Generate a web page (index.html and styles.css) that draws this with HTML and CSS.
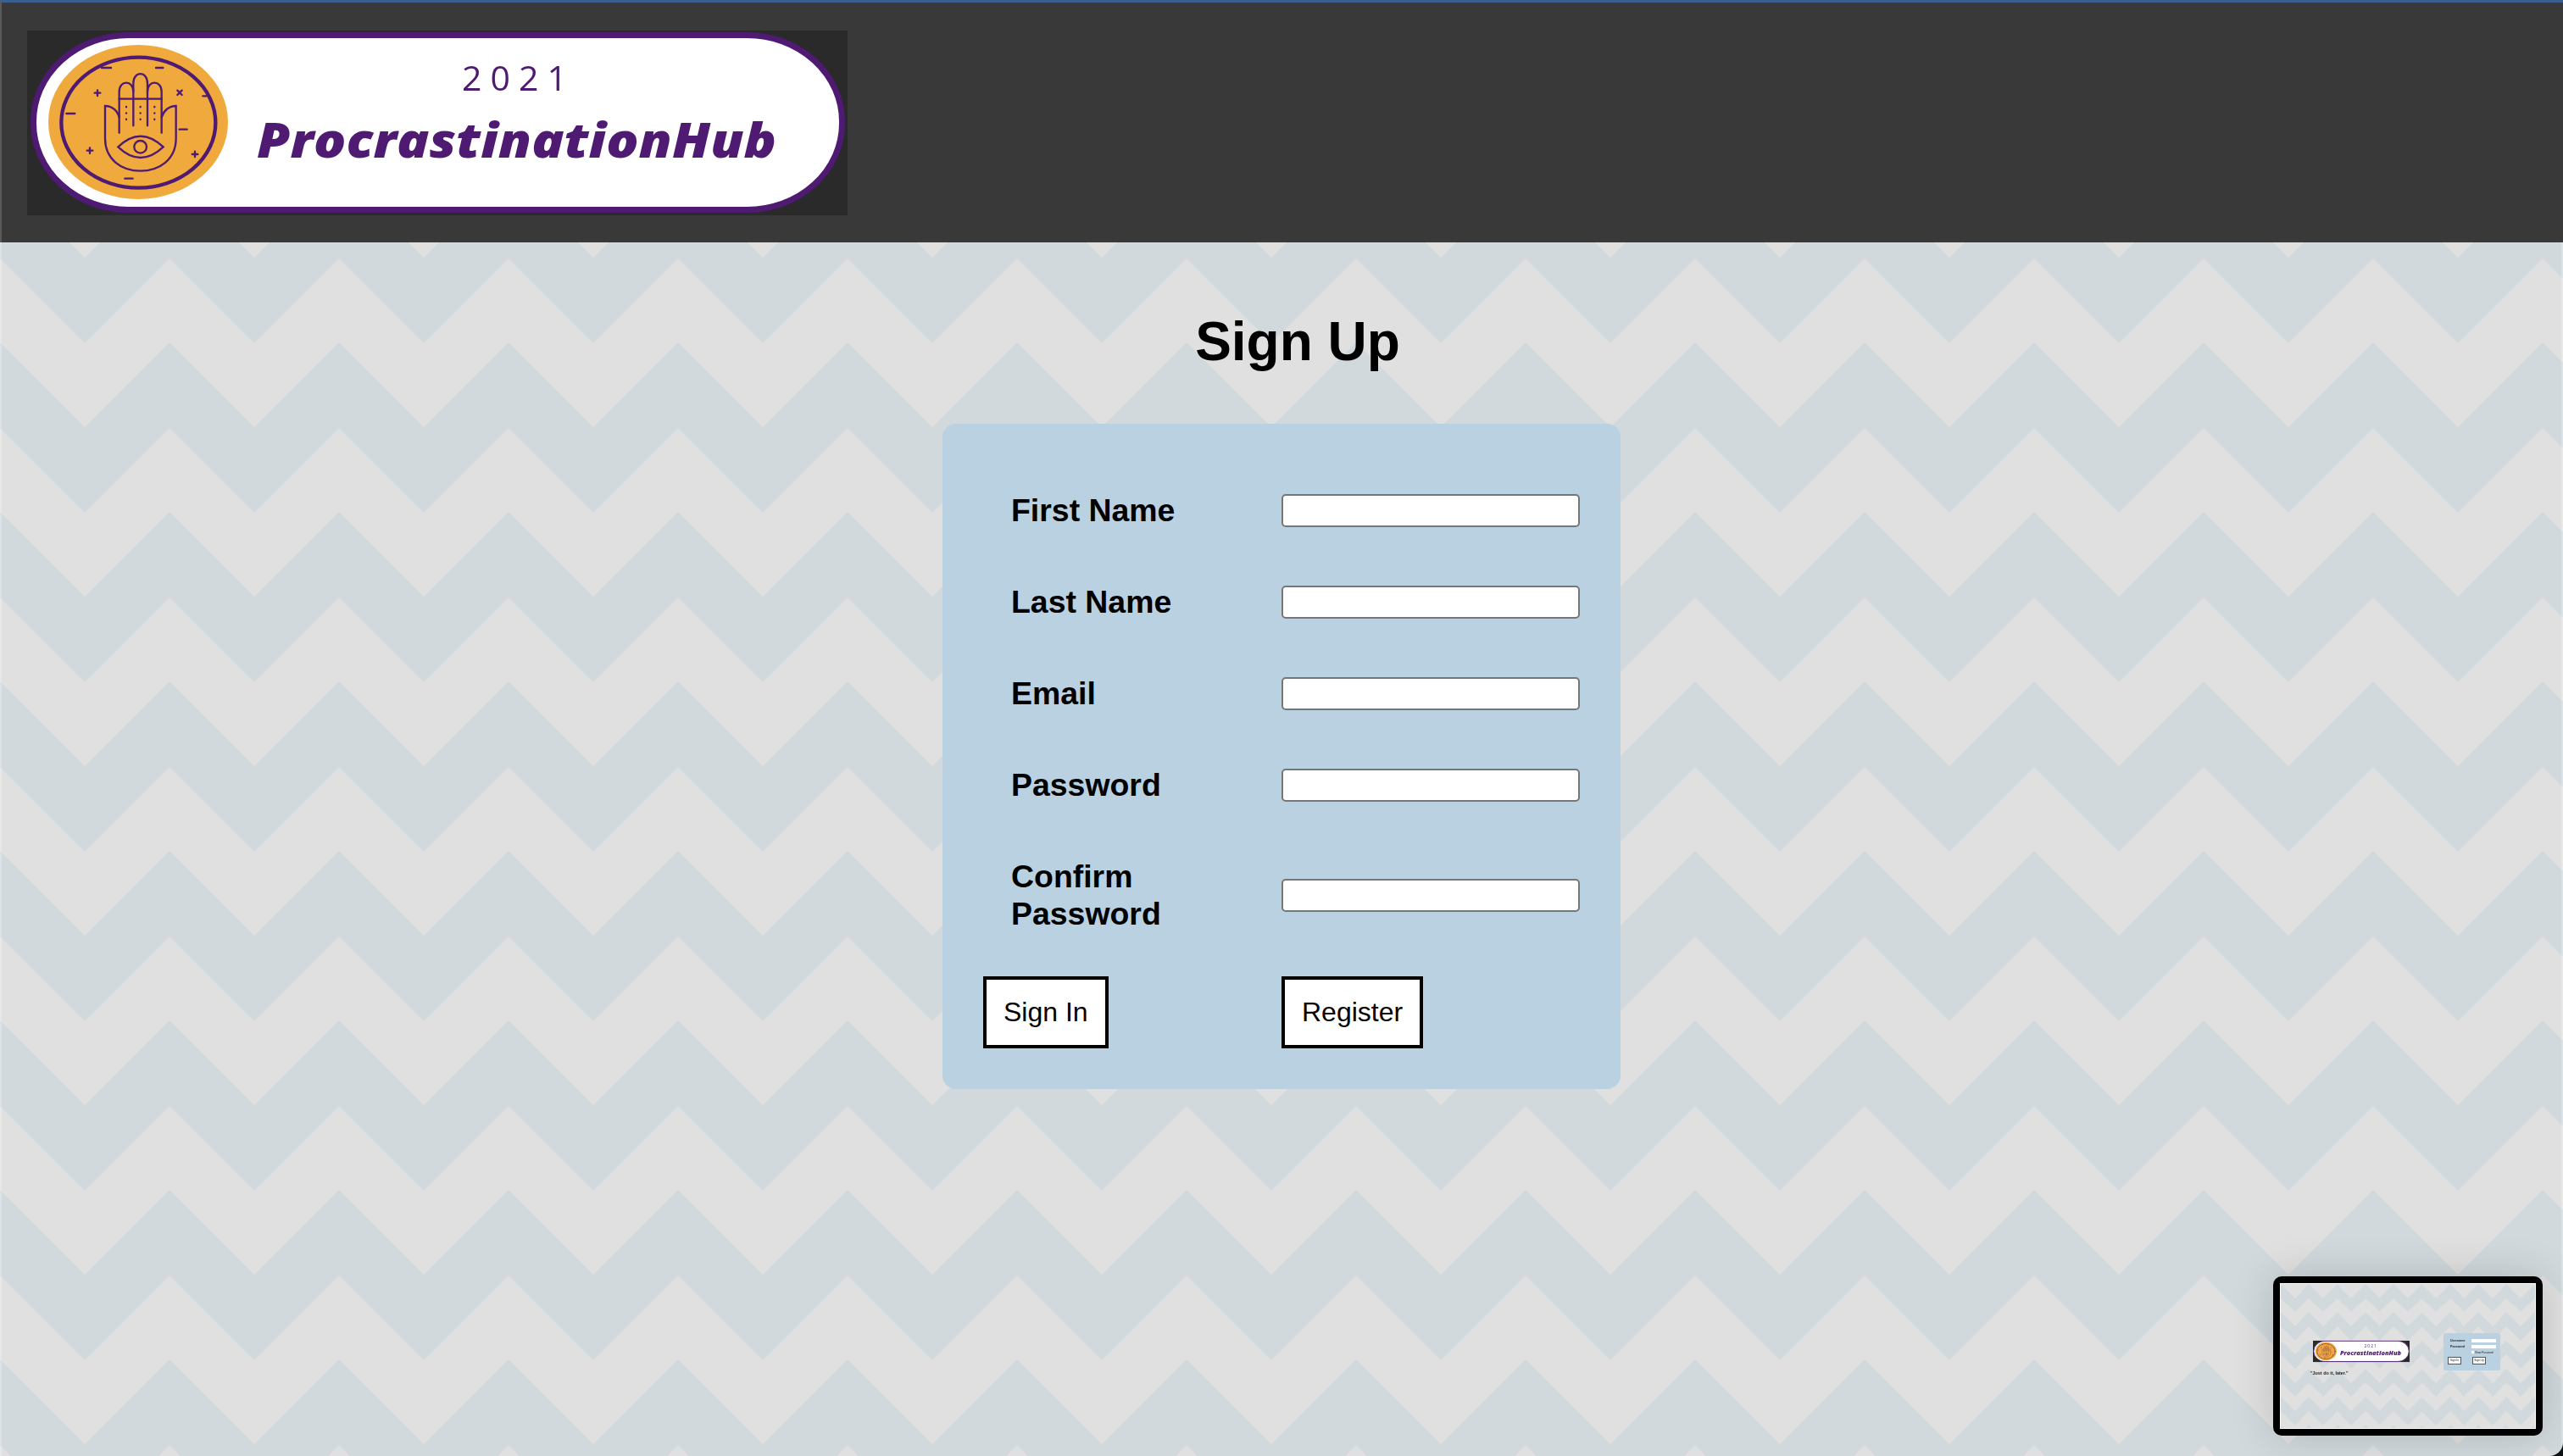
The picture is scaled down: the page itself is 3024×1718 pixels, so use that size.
FILE: index.html
```html
<!DOCTYPE html>
<html lang="en">
<head>
	<meta charset="UTF-8">
	<title>Sign Up</title>
	<link rel="stylesheet" href="styles.css">
</head>
<body>
	<svg class="defs" width="0" height="0">
		<symbol id="logo-art" viewBox="0 0 968 218">
			<rect width="968" height="218" fill="#2a2a2a"/>
			<rect x="7.5" y="5.5" width="954" height="206" rx="112" ry="102" fill="#fff" stroke="#4f1a72" stroke-width="7"/>
			<ellipse cx="131" cy="108" rx="106" ry="91" fill="#f0a93c"/>
			<!-- hand, coords traced from a 3x crop -->
			<g transform="translate(-2 -6) scale(.3333)" fill="none" stroke="#4f1a72" stroke-width="7" stroke-linecap="round">
				<ellipse cx="400" cy="344" rx="273" ry="231" stroke-width="13"/>
				<path d="M382 355V205C382 160 432 160 432 205V355"/>
				<path d="M332 380V235C332 192 382 192 382 235"/>
				<path d="M432 235C432 192 482 192 482 235V380"/>
				<path d="M332 260H482"/>
				<path d="M332 325C325 300 305 285 282 285V400C282 475 340 515 407 515C474 515 533 475 533 400V285C510 285 490 300 482 325"/>
				<path d="M328 430Q407 354 488 430Q407 506 328 430Z"/>
				<circle cx="407" cy="430" r="22"/>
				<path d="M270 150H303M462 150H487M145 312H175M545 368H572M352 542H380M628 250H640"/>
				<path d="M245 239H265M255 229V249M218 443H238M228 433V453M590 456H610M600 446V466M538 230L554 246M554 230L538 246"/>
				<path stroke-dasharray="1 21" d="M357 288V354M407 288V354M457 288V354"/>
			</g>
		</symbol>
	</svg>

	<header class="topbar">
		<svg class="logo" viewBox="0 0 968 218">
			<use href="#logo-art" width="968" height="218"/>
			<text class="logo-year" x="575" y="71" text-anchor="middle" textLength="124">2021</text>
			<text class="logo-name" x="271" y="150" textLength="613" lengthAdjust="spacingAndGlyphs">ProcrastinationHub</text>
		</svg>
	</header>

	<main class="page">
		<h1 class="title">Sign Up</h1>
		<form class="card">
			<div class="row">
				<label class="row-label" for="first">First Name</label>
				<input class="row-input" id="first" type="text">
			</div>
			<div class="row">
				<label class="row-label" for="last">Last Name</label>
				<input class="row-input" id="last" type="text">
			</div>
			<div class="row">
				<label class="row-label" for="email">Email</label>
				<input class="row-input" id="email" type="text">
			</div>
			<div class="row">
				<label class="row-label" for="pass">Password</label>
				<input class="row-input" id="pass" type="password">
			</div>
			<div class="row">
				<label class="row-label" for="pass2">Confirm<br>Password</label>
				<input class="row-input" id="pass2" type="password">
			</div>
			<div class="actions">
				<div class="actions-left"><button class="btn" type="button">Sign In</button></div>
				<button class="btn" type="button">Register</button>
			</div>
		</form>
	</main>

	<!-- floating preview of the sign in page -->
	<div class="preview">
		<div class="preview-screen">
			<div class="preview-brand">
				<svg class="preview-logo" viewBox="0 0 968 218">
					<use href="#logo-art" width="968" height="218"/>
					<text class="logo-year" x="575" y="71" text-anchor="middle" textLength="124">2021</text>
					<text class="logo-name" x="271" y="150" textLength="613" lengthAdjust="spacingAndGlyphs">ProcrastinationHub</text>
				</svg>
				<p class="preview-quote">"Just do it, later."</p>
			</div>
			<div class="preview-card">
				<div class="preview-row"><span class="preview-label">Username</span><span class="preview-input"></span></div>
				<div class="preview-row"><span class="preview-label">Password</span><span class="preview-input"></span></div>
				<div class="preview-show"><span class="preview-check"></span>Show Password</div>
				<div class="preview-actions">
					<span class="preview-btn">Sign In</span>
					<span class="preview-btn">Sign Up</span>
				</div>
			</div>
		</div>
	</div>

	<div class="corner"></div>
</body>
</html>
```

FILE: styles.css
```css
*{
	margin: 0;
	padding: 0;
	box-sizing: border-box;
}
html, body{
	height: 100%;
}
body{
	display: flex;
	flex-direction: column;
	overflow: hidden;
	font-family: "Liberation Sans", Arial, sans-serif;
	color: #000;
	background: #e0e0e0;
}
.defs{
	position: absolute;
}

/* header */
.topbar{
	height: 286px;
	flex: none;
	padding: 33px 0 0 30px;
	background: #393939;
	border-top: 3px solid #3a5f92;
	border-left: 2px solid #5a5a5a;
}
.logo{
	display: block;
	width: 968px;
	height: 218px;
	filter: blur(.4px);
}
.logo-year{
	font-family: "Open Sans", sans-serif;
	font-size: 41px;
	fill: #4f1a72;
}
.logo-name{
	font-family: "Open Sans", sans-serif;
	font-size: 57px;
	font-weight: 800;
	font-style: italic;
	fill: #4f1a72;
}

/* chevrons */
.page{
	flex: 1;
	padding-top: 80px;
	background-color: #e0e0e0;
	background-image: url("data:image/svg+xml,%3Csvg xmlns='http://www.w3.org/2000/svg' width='200' height='200'%3E%3Cpath fill='%23d1d9dc' d='M0 0L100 100L200 0V101L100 201L0 101Z'/%3E%3Cpath fill='%23d1d9dc' d='M0 200L100 300L200 200V301L100 401L0 301Z'/%3E%3Cpath fill='%23d1d9dc' d='M0 -200L100 -100L200 -200V-99L100 1L0 -99Z'/%3E%3C/svg%3E");
	background-origin: border-box;
	background-position: 0 -82px;
	background-size: 200px 200px;
	border-left: 2px solid rgba(255, 255, 255, .25);
	border-right: 2px solid rgba(255, 255, 255, .25);
}
.title{
	padding-left: 38px;
	font-size: 64px;
	font-weight: bold;
	text-align: center;
}

/* form */
.card{
	width: 800px;
	height: 785px;
	margin: 60px auto 0;
	padding: 80px 0 0 48px;
	background: #bad1e2;
	border-radius: 16px;
}
.row{
	display: flex;
	align-items: center;
	min-height: 44px;
	margin-bottom: 64px;
}
.row-label{
	width: 352px;
	padding-left: 33px;
	font-size: 37.44px;
	font-weight: bold;
	line-height: 44px;
}
.row-input{
	width: 352px;
	height: 39px;
	background: #fff;
	border: 2px solid #767676;
	border-radius: 5px;
}
.actions{
	display: flex;
	margin-top: -12px;
}
.actions-left{
	width: 352px;
}
.btn{
	height: 85px;
	padding: 0 20px;
	font-family: inherit;
	font-size: 32px;
	color: #000;
	background: #fff;
	border: 4px solid #000;
}

/* preview window */
.preview{
	position: absolute;
	right: 24px;
	bottom: 24px;
	width: 318px;
	height: 188px;
	padding: 8px;
	background: #000;
	border-radius: 10px;
	box-shadow: 0 0 50px rgba(0, 0, 0, .16);
}
.preview-screen{
	display: flex;
	height: 100%;
	padding: 58px 41px 0 35px;
	border: 1px solid #fff;
	background-color: #e0e0e0;
	background-image: url("data:image/svg+xml,%3Csvg xmlns='http://www.w3.org/2000/svg' width='200' height='200'%3E%3Cpath fill='%23d1d9dc' d='M0 0L100 100L200 0V100L100 200L0 100Z'/%3E%3Cpath fill='%23d1d9dc' d='M0 -200L100 -100L200 -200V-100L100 0L0 -100Z'/%3E%3C/svg%3E");
	background-size: 33.3px 33.3px;
	filter: blur(.5px);
}
.preview-brand{
	width: 157px;
	padding-top: 7px;
}
.preview-logo{
	display: block;
	width: 114px;
	height: 29px;
	margin-left: 3px;
}
.preview-quote{
	margin-top: 8px;
	font-size: 5.4px;
	font-weight: bold;
	color: #222;
}
.preview-card{
	width: 67px;
	height: 44px;
	padding: 5px 5px 0 8px;
	background: #bad1e2;
	border-radius: 2px;
	font-size: 3.6px;
	color: #222;
}
.preview-row{
	display: flex;
	align-items: center;
	height: 7px;
}
.preview-label{
	width: 25px;
	font-weight: bold;
}
.preview-input{
	width: 29px;
	height: 4px;
	background: #fff;
}
.preview-show{
	display: flex;
	align-items: center;
	gap: 1px;
	height: 7px;
	margin-left: 25px;
	font-size: 3px;
}
.preview-check{
	width: 3px;
	height: 3px;
	background: #fff;
}
.preview-actions{
	display: flex;
	gap: 13px;
	margin: 2px 0 0 -3px;
}
.preview-btn{
	display: block;
	width: 16px;
	height: 9px;
	font-size: 3.2px;
	line-height: 7.5px;
	text-align: center;
	background: #fff;
	border: 1px solid #555;
}

/* window corner */
.corner{
	position: absolute;
	right: 0;
	bottom: 0;
	width: 16px;
	height: 16px;
	overflow: hidden;
}
.corner::before{
	content: "";
	position: absolute;
	right: 0;
	bottom: 0;
	width: 32px;
	height: 32px;
	border-radius: 16px;
	box-shadow: 0 0 0 16px #111;
}
```
